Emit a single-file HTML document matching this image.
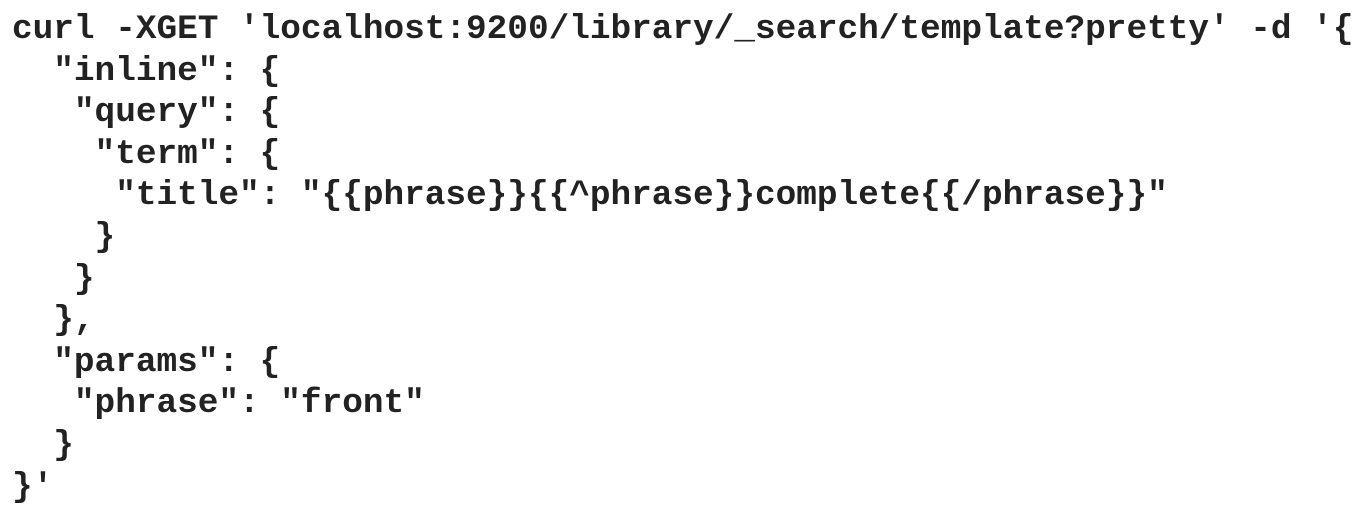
<!DOCTYPE html>
<html><head><style>
html,body{margin:0;padding:0;background:#fff;width:1368px;height:516px;overflow:hidden}
pre{margin:0;padding:9px 0 0 12px;font-family:"Liberation Mono",monospace;font-weight:bold;font-size:34.4px;line-height:41.6px;color:#222}
</style></head><body><pre>curl -XGET 'localhost:9200/library/_search/template?pretty' -d '{
  "inline": {
   "query": {
    "term": {
     "title": "{{phrase}}{{^phrase}}complete{{/phrase}}"
    }
   }
  },
  "params": {
   "phrase": "front"
  }
}'</pre></body></html>
